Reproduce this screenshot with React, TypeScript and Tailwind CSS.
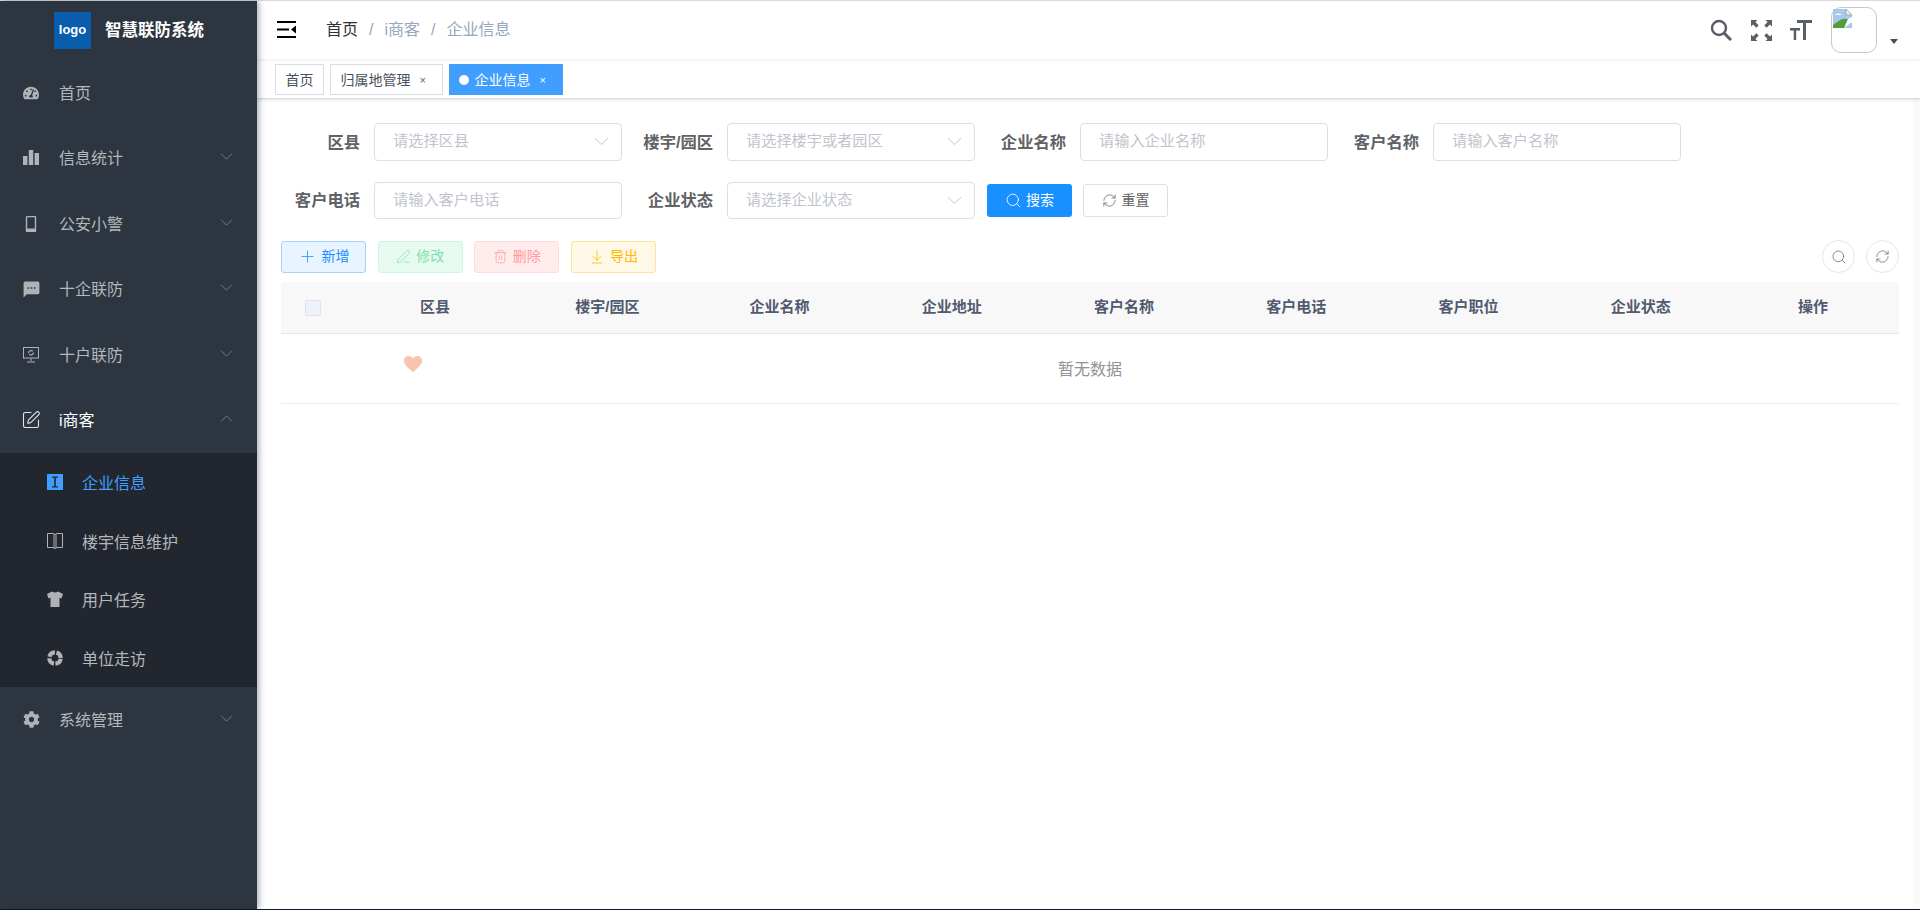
import React from "react";
import { FaTachometerAlt, FaCog } from "react-icons/fa";
import { MdSms } from "react-icons/md";
import { ChevronDown, ChevronUp, SquarePen, Search, RefreshCw, Plus, PenLine, Trash2, ArrowDownToLine } from "lucide-react";

const font = { fontFamily: '"Liberation Sans", "Noto Sans CJK SC", sans-serif' };

const Bars = () => (
  <svg width="16" height="16" viewBox="0 0 16 16" fill="currentColor"><rect x="0" y="6" width="4.4" height="9" /><rect x="5.8" y="0" width="4.4" height="15" /><rect x="11.6" y="3" width="4.4" height="12" /></svg>
);
const Phone = () => (
  <svg width="16" height="16" viewBox="0 0 16 16" fill="none" stroke="currentColor"><rect x="3.5" y="0.5" width="9" height="15" rx="1" strokeWidth="1.4" /><rect x="3.5" y="13" width="9" height="2.5" fill="currentColor" /></svg>
);
const Screen = () => (
  <svg width="16" height="16" viewBox="0 0 16 16" fill="none" stroke="currentColor" strokeWidth="1"><rect x="0.5" y="0.500" width="15" height="10.500" /><path d="M8 11v3M4 15h8" /><path d="M5.5 6a2.5 2.5 0 0 1 4.3-1.600M10.500 5.500a2.500 2.500 0 0 1-4.300 1.600" strokeWidth="1.100" /></svg>
);
const IBox = () => (
  <svg width="16" height="16" viewBox="0 0 16 16"><rect width="16" height="16" fill="#409eff" rx="0.5" /><path d="M5 2.500h6v1.200H8.800v8.600H11v1.200H5v-1.200h2.200V3.700H5z" fill="#22262e" /></svg>
);
const Book = () => (
  <svg width="16" height="16" viewBox="0 0 16 16" fill="none" stroke="currentColor" strokeWidth="1"><path d="M0.500 0.500h5.500l2 1 2-1h5.500v14h-5.500l-2 1-2-1H0.500zM7 1.500v13.500M9 1.500v13.500" /></svg>
);
const Ring = () => (
  <svg width="16" height="16" viewBox="0 0 16 16" fill="none"><circle cx="8" cy="8" r="5.700" stroke="currentColor" strokeWidth="4.200" strokeDasharray="7.400 1.550" strokeDashoffset="8.100" /></svg>
);
const Shirt = () => (
  <svg width="16" height="16" viewBox="0 0 16 16" fill="currentColor"><path d="M5 0.500L0 3l1.500 4.500 2-0.700V16h9V6.800l2 0.700L16 3 11 0.500Q8 2.500 5 0.500z" /></svg>
);

const Row = ({ icon, label, arrow, white }: { icon: React.ReactNode; label: string; arrow?: "down" | "up"; white?: boolean }) => (
  <div className={`h-[65.5px] flex items-center pl-[23px] pr-[20px] ${white ? "text-white" : "text-[#b4b7bc]"}`}>
    <span className={`w-4 h-4 flex items-center justify-center [&>svg]:shrink-0 ${white ? "text-[#e4e4e4]" : "text-[#b0b2b6]"}`}>{icon}</span>
    <span className="ml-[20px] mt-[2px] text-[16px] flex-1">{label}</span>
    {arrow === "down" && <ChevronDown size={21} strokeWidth={1} className="text-[#7f848c] -mt-[3px]" />}
    {arrow === "up" && <ChevronUp size={21} strokeWidth={1} className="text-[#7f848c] -mt-[3px]" />}
  </div>
);

const Sub = ({ icon, label, active }: { icon: React.ReactNode; label: string; active?: boolean }) => (
  <div className={`h-[58.5px] flex items-center pl-[47px] ${active ? "text-[#409eff]" : "text-[#b4b7bc]"}`}>
    <span className="w-4 h-4 flex items-center justify-center text-[#b0b2b6] [&>svg]:shrink-0">{icon}</span>
    <span className="ml-[19px] mt-[4px] text-[16px]">{label}</span>
  </div>
);

const Sidebar = () => (
  <aside className="w-[257px] shrink-0 bg-[#2d3540] shadow-[2px_0_6px_rgba(0,21,41,0.35)] z-10 flex flex-col">
    <div className="h-[59px] flex items-center pl-[54px]">
      <div className="w-[37px] h-[37px] bg-[#0a5cad] text-white text-[13px] font-bold flex items-center justify-center -mt-[1px]">logo</div>
      <span className="ml-[14px] text-white text-[16.5px] font-bold">智慧联防系统</span>
    </div>
    <Row icon={<FaTachometerAlt size={16} />} label="首页" />
    <Row icon={<Bars />} label="信息统计" arrow="down" />
    <Row icon={<Phone />} label="公安小警" arrow="down" />
    <Row icon={<MdSms size={19} />} label="十企联防" arrow="down" />
    <Row icon={<Screen />} label="十户联防" arrow="down" />
    <Row icon={<SquarePen size={20} strokeWidth={1.300} />} label="i商客" arrow="up" white />
    <div className="bg-[#22262e]">
      <Sub icon={<IBox />} label="企业信息" active />
      <Sub icon={<Book />} label="楼宇信息维护" />
      <Sub icon={<Shirt />} label="用户任务" />
      <Sub icon={<Ring />} label="单位走访" />
    </div>
    <Row icon={<FaCog size={17} />} label="系统管理" arrow="down" />
  </aside>
);

const Header = () => (
  <header className="h-[58px] flex items-center pl-[20px] pr-[22px] shadow-[0_1px_4px_rgba(0,21,41,0.08)] z-[2] bg-white">
    <svg width="19" height="17" viewBox="0 0 19 17" className="text-black -mt-[1px]" fill="currentColor"><rect width="19" height="2" /><rect y="7.500" width="12" height="2" /><rect y="15" width="19" height="2" /><path d="M19 4.500v8l-5-4z" /></svg>
    <nav className="ml-[30px] text-[16px] flex items-center text-[#97a8be] flex-1">
      <span className="text-[#303133]">首页</span>
      <span className="mx-[11px]">/</span>
      <span>i商客</span>
      <span className="mx-[11px]">/</span>
      <span>企业信息</span>
    </nav>
    <svg width="22" height="22" viewBox="0 0 22 22" fill="none" stroke="#5a5e66" strokeWidth="2.400" className="mr-[19px]"><circle cx="9" cy="9" r="7" /><path d="M14 14l7 7" strokeWidth="3" /></svg>
    <svg width="21" height="21" viewBox="0 0 21 21" fill="#5a5e66" className="mr-[18px]"><path d="M0 0h6.500L4.400 2.100l3.300 3.300-2.300 2.300-3.300-3.300L0 6.500zM21 0v6.500l-2.100-2.100-3.300 3.300-2.300-2.300 3.300-3.300L14.500 0zM0 21v-6.500l2.100 2.100 3.300-3.300 2.300 2.300-3.300 3.300L6.500 21zM21 21h-6.500l2.100-2.100-3.300-3.300 2.300-2.300 3.300 3.300 2.100-2.100z" /></svg>
    <svg width="22" height="22" viewBox="0 0 22 22" fill="#5a5e66" className="mr-[19px]"><rect x="7" y="1" width="15" height="3" /><rect x="13" y="1" width="3" height="20" /><rect x="0" y="9" width="10" height="2.500" /><rect x="3.700" y="9" width="2.500" height="12" /></svg>
    <div className="w-[46px] h-[46px] rounded-[10px] border border-[#c8c8c8] relative -mt-[1px]">
      <svg width="20" height="20" viewBox="0 0 20 20" className="absolute left-[1px] top-[1px]"><path d="M0 0h13l6 6v13H0z" fill="#a9c8ee" /><path d="M13 0v6h6z" fill="#eeeeee" stroke="#8e8e8e" strokeWidth="0.600" /><path d="M0 19v-3l7-5q6-3 11 1l-7 7z" fill="#4f9e3a" /><path d="M15 10l4-2v5l-8 6z" fill="#ffffff" /><path d="M2 6q3-3 7 0z" fill="#ffffff" /></svg>
    </div>
    <span className="ml-[13px] mt-[23px] w-0 h-0 border-x-[4px] border-x-transparent border-t-[5px] border-t-[#4a4f57]" />
  </header>
);

const Tag = ({ label, close, active }: { label: string; close?: boolean; active?: boolean }) => (
  <div className={`h-[31px] flex items-center text-[14px] border ${active ? "bg-[#409eff] border-[#409eff] text-white pl-[9px] pr-[16px]" : `bg-white border-[#d8dce5] text-[#495060] ${close ? "pl-[9.500px] pr-[16.500px]" : "px-[9.500px]"}`}`}>
    {active && <span className="w-[10px] h-[10px] rounded-full bg-white mr-[5px]" />}
    <span className="mt-[1px]">{label}</span>
    {close && <span className={`ml-[9px] mt-[1px] text-[11px] ${active ? "text-white" : "text-[#5a5e66]"}`}>×</span>}
  </div>
);

const Tags = () => (
  <div className="h-[40px] pt-[5px] pl-[18px] flex gap-[6px] items-start border-b border-[#d8dce5] shadow-[0_1px_3px_rgba(0,0,0,0.12)] z-[1] bg-white">
    <Tag label="首页" />
    <Tag label="归属地管理" close />
    <Tag label="企业信息" close active />
  </div>
);

const Field = ({ label, placeholder, select }: { label: string; placeholder: string; select?: boolean }) => (
  <div className="flex items-center mr-[12px]">
    <label className="w-[79px] text-right text-[16.300px] font-bold text-[#606266] whitespace-nowrap flex justify-end">{label}</label>
    <div className="ml-[14px] w-[248px] h-[37.500px] border border-[#dcdfe6] rounded-[4px] flex items-center pl-[18px] pr-[7px]">
      <span className="flex-1 text-[15.200px] text-[#c0c4cc]">{placeholder}</span>
      {select && <ChevronDown size={25} strokeWidth={0.900} className="text-[#c0c4cc]" />}
    </div>
  </div>
);

const ActionBtn = ({ icon, label, cls }: { icon: React.ReactNode; label: string; cls: string }) => (
  <div className={`w-[85px] h-[32px] rounded-[3px] border flex items-center justify-center gap-[5px] text-[14px] ${cls}`}>
    {icon}
    <span>{label}</span>
  </div>
);

const cols = ["区县", "楼宇/园区", "企业名称", "企业地址", "客户名称", "客户电话", "客户职位", "企业状态", "操作"];

const Content = () => (
  <div className="flex-1 flex min-h-0">
    <main className="flex-1 pl-[24px] pr-[14px] pt-[24px] bg-white">
      <div className="h-[37.500px] flex">
        <Field label="区县" placeholder="请选择区县" select />
        <Field label="楼宇/园区" placeholder="请选择楼宇或者园区" select />
        <Field label="企业名称" placeholder="请输入企业名称" />
        <Field label="客户名称" placeholder="请输入客户名称" />
      </div>
      <div className="mt-[21px] h-[37.500px] flex items-center">
        <Field label="客户电话" placeholder="请输入客户电话" />
        <Field label="企业状态" placeholder="请选择企业状态" select />
        <div className="w-[85px] h-[33px] rounded-[3px] bg-[#1890ff] text-white text-[14px] flex items-center justify-center gap-[4px]">
          <Search size={17} strokeWidth={1.200} />
          <span>搜索</span>
        </div>
        <div className="ml-[11px] w-[85px] h-[33px] rounded-[3px] border border-[#dcdfe6] text-[#606266] text-[14px] flex items-center justify-center gap-[5px]">
          <RefreshCw size={15} strokeWidth={1.200} />
          <span>重置</span>
        </div>
      </div>
      <div className="mt-[21px] flex items-center">
        <div className="flex gap-[11.670px] flex-1">
          <ActionBtn cls="bg-[#e8f4ff] border-[#a3d3ff] text-[#1890ff]" icon={<Plus size={19} strokeWidth={1} />} label="新增" />
          <ActionBtn cls="bg-[#e7faf0] border-[#d0f5e0] text-[#7fdfae]" icon={<PenLine size={15} strokeWidth={1.200} />} label="修改" />
          <ActionBtn cls="bg-[#ffeded] border-[#ffdbdb] text-[#ff9a9a]" icon={<Trash2 size={15} strokeWidth={1.200} />} label="删除" />
          <ActionBtn cls="bg-[#fff8e6] border-[#ffe399] text-[#ffba00]" icon={<ArrowDownToLine size={16} strokeWidth={1.200} />} label="导出" />
        </div>
        <div className="w-[33px] h-[33px] rounded-full border border-[#e4e4ec] flex items-center justify-center text-[#606266]"><Search size={16} strokeWidth={1.100} /></div>
        <div className="ml-[11px] w-[33px] h-[33px] rounded-full border border-[#e4e4ec] flex items-center justify-center text-[#606266]"><RefreshCw size={15} strokeWidth={1.100} /></div>
      </div>
      <div className="mt-[9px] grid grid-cols-[68px_repeat(9,1fr)] h-[52px] bg-[#f8f8f9] border-b border-[#e4e7ed] items-center">
        <div className="pl-[24px]"><div className="w-4 h-4 rounded-[2px] bg-[#edf1fb] border border-[#dfe3ee]" /></div>
        {cols.map((c) => (
          <div key={c} className="text-center text-[15px] font-bold text-[#515a6e]">{c}</div>
        ))}
      </div>
      <div className="relative h-[70px] border-b border-[#ebeef5] flex items-center justify-center text-[16px] text-[#909399]">
        <svg width="18" height="16" viewBox="0 0 18 16" className="absolute left-[123px] top-[22px]" fill="#f9c4ac"><path d="M9 16C4 12 0 9 0 4.800 0 2 2.200 0 4.700 0 6.400 0 8 .8 9 2.200 10 .8 11.600 0 13.300 0 15.800 0 18 2 18 4.800 18 9 14 12 9 16z" /></svg>
        <span className="mt-[3px]">暂无数据</span>
      </div>
    </main>
    <div className="w-[7px] bg-[#fafafa]" />
  </div>
);

export default function App() {
  return (
    <div className="w-[1920px] h-[910px] flex flex-col overflow-hidden bg-white" style={font}>
      <div className="h-[1px] bg-[#dedede] shrink-0" />
      <div className="flex-1 flex min-h-0">
        <Sidebar />
        <div className="flex-1 flex flex-col min-w-0">
          <Header />
          <Tags />
          <Content />
        </div>
      </div>
      <div className="h-[1px] bg-[#0c1b30] shrink-0" />
    </div>
  );
}
